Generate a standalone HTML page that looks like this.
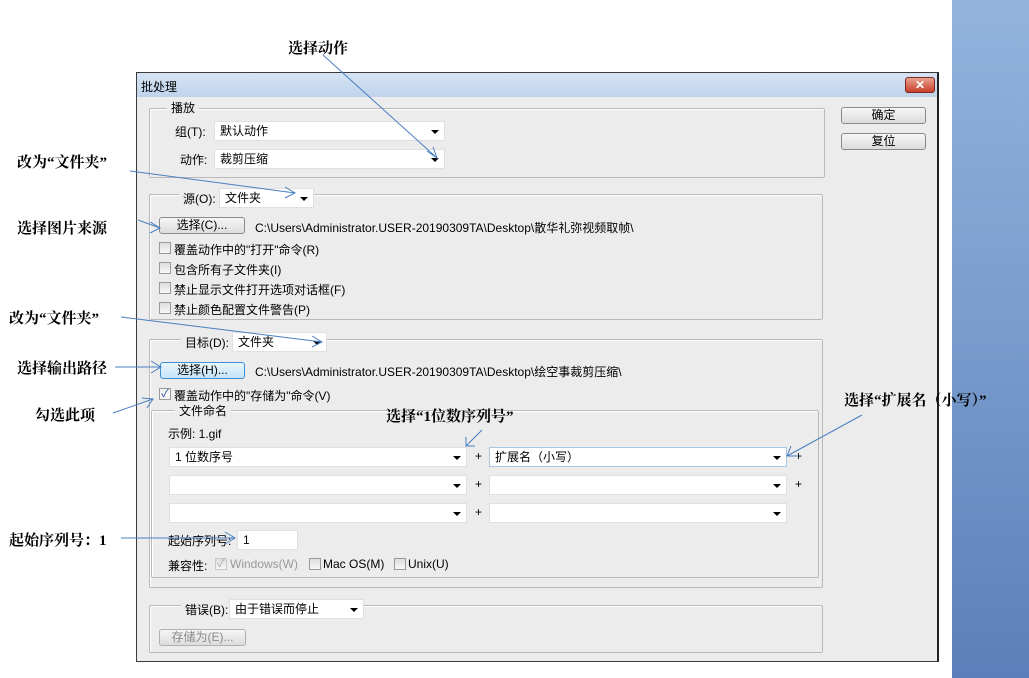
<!DOCTYPE html>
<html><head><meta charset="utf-8"><style>
*{margin:0;padding:0;box-sizing:border-box}
body{width:1029px;height:678px;background:#fff;position:relative;overflow:hidden;font-family:"Liberation Sans","Noto Sans CJK SC",sans-serif;font-size:12px;color:#000}
.a{position:absolute;white-space:nowrap}
#strip{position:absolute;left:952px;top:0;width:77px;height:678px;background:linear-gradient(#93b3de,#7ea0d0 40%,#5b80b9)}
#dlg{position:absolute;left:136px;top:72px;width:803px;height:590px;background:#ececec;border:1px solid #3a3a3a;border-right:2px solid #222}
#title{position:absolute;left:0;top:0;width:100%;height:24px;background:linear-gradient(#d6e4f4,#bfd3ec);}
.grp{position:absolute;border:1px solid #b9b9b9;border-radius:2px;box-shadow:inset 1px 1px 0 #fff}
.sel{position:absolute;background:#fff;border:1px solid #e0e0e0;height:20px;line-height:18px;padding-left:5px}
.sel:after{content:"";position:absolute;right:5px;top:8px;border-left:4px solid transparent;border-right:4px solid transparent;border-top:4px solid #000}
.inp{position:absolute;background:#fff;border:1px solid #e0e0e0;height:20px;line-height:18px;padding-left:5px}
.btn{position:absolute;border:1px solid #8a8a8a;border-radius:3px;background:linear-gradient(#f6f6f6,#dcdcdc);height:17px;line-height:15px;text-align:center}
.cb{position:absolute;width:12px;height:12px;border:1px solid #9a9a9a;background:linear-gradient(#ddd,#f8f8f8)}
.lg{position:absolute;background:#ececec;padding:0 4px}
.an{position:absolute;white-space:nowrap;font-family:"Liberation Serif","Noto Serif CJK SC",serif;font-weight:bold;font-size:15px}
</style></head><body>
<div id="strip"></div>
<div id="dlg">
<div id="title"><span class="a" style="left:4px;top:5px;font-size:12px">批处理</span>
<div class="a" style="left:768px;top:4px;width:30px;height:16px;border-radius:3px;border:1px solid #7a2a20;background:linear-gradient(#e8a090,#c8402a);color:#fff;font-weight:bold;font-size:12px;text-align:center;line-height:14px">✕</div></div>
<div class="grp" style="left:12px;top:35px;width:676px;height:70px"></div>
<span class="lg" style="left:30px;top:26px">播放</span>
<span class="a" style="left:38px;top:50px">组(T):</span>
<div class="sel" style="left:77px;top:48px;width:231px">默认动作</div>
<span class="a" style="left:43px;top:78px">动作:</span>
<div class="sel" style="left:77px;top:76px;width:231px">裁剪压缩</div>
<div class="btn" style="left:704px;top:34px;width:85px">确定</div>
<div class="btn" style="left:704px;top:60px;width:85px">复位</div>
<div class="grp" style="left:12px;top:121px;width:674px;height:126px"></div>
<span class="lg" style="left:42px;top:117px">源(O):</span>
<div class="sel" style="left:82px;top:115px;width:95px">文件夹</div>
<div class="btn" style="left:22px;top:144px;width:86px">选择(C)...</div>
<span class="a" style="left:118px;top:146px">C:\Users\Administrator.USER-20190309TA\Desktop\散华礼弥视频取帧\</span>
<div class="cb" style="left:22px;top:169px"></div><span class="a" style="left:37px;top:168px">覆盖动作中的"打开"命令(R)</span>
<div class="cb" style="left:22px;top:189px"></div><span class="a" style="left:37px;top:188px">包含所有子文件夹(I)</span>
<div class="cb" style="left:22px;top:209px"></div><span class="a" style="left:37px;top:208px">禁止显示文件打开选项对话框(F)</span>
<div class="cb" style="left:22px;top:229px"></div><span class="a" style="left:37px;top:228px">禁止颜色配置文件警告(P)</span>
<div class="grp" style="left:12px;top:266px;width:674px;height:249px"></div>
<span class="lg" style="left:44px;top:261px">目标(D):</span>
<div class="sel" style="left:95px;top:259px;width:95px">文件夹</div>
<div class="btn" style="left:23px;top:289px;width:85px;border-color:#3c8fd0;background:linear-gradient(#eaf6fd,#c4e4f8)">选择(H)...</div>
<span class="a" style="left:118px;top:290px">C:\Users\Administrator.USER-20190309TA\Desktop\绘空事裁剪压缩\</span>
<div class="cb" style="left:22px;top:315px;background:#f4f4f4;color:#2a4a9a;font-size:11px;line-height:10px;text-align:center">✓</div><span class="a" style="left:37px;top:314px">覆盖动作中的"存储为"命令(V)</span>
<div class="grp" style="left:14px;top:337px;width:668px;height:168px"></div>
<span class="lg" style="left:38px;top:329px">文件命名</span>
<span class="a" style="left:31px;top:352px">示例: 1.gif</span>
<div class="sel" style="left:32px;top:374px;width:298px">1 位数序号</div><span class="a" style="left:338px;top:376px">+</span>
<div class="sel" style="left:352px;top:374px;width:298px;border-color:#a9c8e4">扩展名（小写）</div><span class="a" style="left:658px;top:376px">+</span>
<div class="sel" style="left:32px;top:402px;width:298px"></div><span class="a" style="left:338px;top:404px">+</span>
<div class="sel" style="left:352px;top:402px;width:298px"></div><span class="a" style="left:658px;top:404px">+</span>
<div class="sel" style="left:32px;top:430px;width:298px"></div><span class="a" style="left:338px;top:432px">+</span>
<div class="sel" style="left:352px;top:430px;width:298px"></div>
<span class="a" style="left:31px;top:459px">起始序列号:</span>
<div class="inp" style="left:100px;top:457px;width:61px">1</div>
<span class="a" style="left:31px;top:484px">兼容性:</span>
<div class="cb" style="left:78px;top:485px;border-color:#c8c8c8;color:#aaa;font-size:11px;line-height:10px;text-align:center">✓</div><span class="a" style="left:93px;top:484px;color:#9a9a9a">Windows(W)</span>
<div class="cb" style="left:172px;top:485px"></div><span class="a" style="left:186px;top:484px">Mac OS(M)</span>
<div class="cb" style="left:257px;top:485px"></div><span class="a" style="left:271px;top:484px">Unix(U)</span>
<div class="grp" style="left:12px;top:532px;width:674px;height:48px"></div>
<span class="lg" style="left:44px;top:528px">错误(B):</span>
<div class="sel" style="left:92px;top:526px;width:135px">由于错误而停止</div>
<div class="btn" style="left:22px;top:556px;width:87px;color:#8a8a8a;border-color:#b0b0b0">存储为(E)...</div>
</div>
<span class="an" style="left:288px;top:37px">选择动作</span>
<span class="an" style="left:17px;top:151px">改为“文件夹”</span>
<span class="an" style="left:17px;top:217px">选择图片来源</span>
<span class="an" style="left:9px;top:307px">改为“文件夹”</span>
<span class="an" style="left:17px;top:357px">选择输出路径</span>
<span class="an" style="left:35px;top:404px">勾选此项</span>
<span class="an" style="left:386px;top:405px">选择“1位数序列号”</span>
<span class="an" style="left:844px;top:389px">选择“扩展名（小写）”</span>
<span class="an" style="left:9px;top:529px">起始序列号：1</span>
<svg width="1029" height="678" style="position:absolute;left:0;top:0" fill="none" stroke="#4a7fc1" stroke-width="1">
<path d="M323 55L437 158M427 151l10 7-4-11"/>
<path d="M130 171L295 193M285 187l10 6-10 5"/>
<path d="M138 220L160 228M150 222l10 6-10 5"/>
<path d="M121 317L322 342M312 336l10 6-10 5"/>
<path d="M115 367L161 367M151 361l10 6-10 6"/>
<path d="M113 413L153 399M142 398l11 1-6 9"/>
<path d="M482 430L466 446M466 437v9h9"/>
<path d="M862 415L787 456M791 446l-4 10 11 0"/>
<path d="M121 538L235 538M225 532l10 6-10 6"/>
</svg>
</body></html>
